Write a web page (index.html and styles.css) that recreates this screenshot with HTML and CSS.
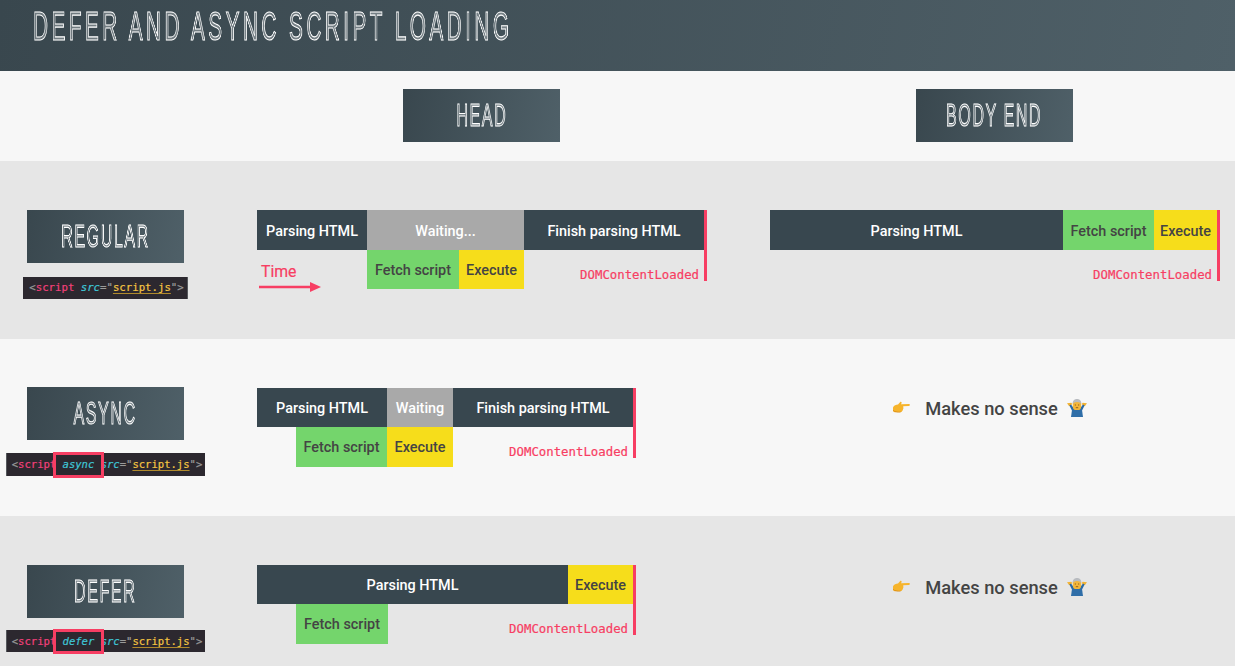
FILE: index.html
```html
<!DOCTYPE html>
<html lang="en">
<head>
<meta charset="utf-8">
<title>Defer and async script loading</title>
<link rel="stylesheet" href="styles.css">
</head>
<body>
<div class="page">
  <header class="top"><h1 class="title"><span>DEFER AND ASYNC SCRIPT LOADING</span></h1></header>

  <section class="row row-head">
    <div></div>
    <div class="col"><h2 class="tag"><span>HEAD</span></h2></div>
    <div class="col"><h2 class="tag"><span>BODY END</span></h2></div>
  </section>

  <section class="row row-grey">
    <div class="side">
      <h2 class="tag"><span>REGULAR</span></h2>
      <code class="chip chip-first"><i class="p">&lt;</i><b>script</b> <em>src</em><i class="p">="</i><u>script.js</u><i class="p">"&gt;</i></code>
    </div>
    <div class="col">
      <div class="tl">
        <div class="bars">
          <div class="seg dark w110">Parsing HTML</div>
          <div class="seg grey w157">Waiting...</div>
          <div class="seg dark w180">Finish parsing HTML</div>
        </div>
        <div class="bars under">
          <div class="lead w110">
            <span class="time">Time</span>
            <svg class="arrow" width="62" height="10" viewBox="0 0 62 10"><path d="M0 5h51" stroke="#f73e63" stroke-width="2.4"/><path d="M51 0l11 5-11 5z" fill="#f73e63"/></svg>
          </div>
          <div class="seg green w92">Fetch script</div>
          <div class="seg yellow w65">Execute</div>
          <div class="dom">DOMContentLoaded</div>
        </div>
      </div>
    </div>
    <div class="col">
      <div class="tl">
        <div class="bars">
          <div class="seg dark w293">Parsing HTML</div>
          <div class="seg green w91">Fetch script</div>
          <div class="seg yellow w63">Execute</div>
        </div>
        <div class="bars under"><div class="dom dom-full">DOMContentLoaded</div></div>
      </div>
    </div>
  </section>

  <section class="row row-light">
    <div class="side">
      <h2 class="tag"><span>ASYNC</span></h2>
      <code class="chip chip-async"><i class="p">&lt;</i><b>script</b><span class="attr"> <em>async</em> </span><em>src</em><i class="p">="</i><u>script.js</u><i class="p">"&gt;</i></code>
    </div>
    <div class="col">
      <div class="tl tl-short">
        <div class="bars">
          <div class="seg dark w130">Parsing HTML</div>
          <div class="seg grey w66">Waiting</div>
          <div class="seg dark w180">Finish parsing HTML</div>
        </div>
        <div class="bars under">
          <div class="lead w39"></div>
          <div class="seg green w91">Fetch script</div>
          <div class="seg yellow w66">Execute</div>
          <div class="dom">DOMContentLoaded</div>
        </div>
      </div>
    </div>
    <div class="col"><p class="note note-up"><svg class="emoji" width="18" height="14" viewBox="0 0 18 14"><path d="M1 6.500C2 4 4 4 6 3.500L8 1.200c1-.8 2 0 1.500 1L9 3.300l8-.2c1.200.1 1.200 1.700 0 1.800l-6 .3c.6.500.6 1.200.2 1.600.3.600.2 1.200-.3 1.500.2.700-.1 1.300-.7 1.500-.1.800-.7 1.300-1.400 1.300H5.500C3 11.500 1.500 11 1 10z" fill="#f6b42c"/><path d="M1 9.800c.8.900 2.500 1.500 4.500 1.700H8c.5 0 1-.300 1.200-.7-2.500.2-5.500 0-8.200-1.800z" fill="#d98a16"/></svg><span class="note-text">Makes no sense</span><svg class="emoji" width="20" height="18" viewBox="0 0 20 18"><path d="M0 4.300l4.300-.5.900 1.200-2 2.200-1.200-.2zM20 4.300l-4.300-.5-.9 1.200 2 2.200 1.200-.2z" fill="#f2b233"/><path d="M2.400 6.500l1.600-1 3 4-1.800 2.500zM17.600 6.500l-1.600-1-3 4 1.800 2.500z" fill="#2a6aa6"/><path d="M5 11c.5-1.500 2.700-2.200 5-2.200s4.500.7 5 2.200l1 7H4z" fill="#2f6ea8"/><rect x="5.800" y="1.500" width="8.400" height="9.500" rx="3.600" fill="#f3b63a"/><path d="M5.700 5.200C5.300 1.300 8 0 10 0s4.700 1.300 4.300 5.200c-.8-1.400-2-2.100-4.300-2.100s-3.500.7-4.300 2.100z" fill="#b9bcc0"/><path d="M7.800 6h1.200M11 6h1.200M8.800 8.700h2.400" stroke="#7a4a12" stroke-width=".8"/></svg></p></div>
  </section>

  <section class="row row-grey row-last">
    <div class="side">
      <h2 class="tag"><span>DEFER</span></h2>
      <code class="chip chip-defer"><i class="p">&lt;</i><b>script</b><span class="attr"> <em>defer</em> </span><em>src</em><i class="p">="</i><u>script.js</u><i class="p">"&gt;</i></code>
    </div>
    <div class="col">
      <div class="tl tl-short">
        <div class="bars">
          <div class="seg dark w311">Parsing HTML</div>
          <div class="seg yellow w65">Execute</div>
        </div>
        <div class="bars under">
          <div class="lead w39"></div>
          <div class="seg green w92">Fetch script</div>
          <div class="dom">DOMContentLoaded</div>
        </div>
      </div>
    </div>
    <div class="col"><p class="note"><svg class="emoji" width="18" height="14" viewBox="0 0 18 14"><path d="M1 6.500C2 4 4 4 6 3.500L8 1.200c1-.8 2 0 1.500 1L9 3.300l8-.2c1.200.1 1.200 1.700 0 1.800l-6 .3c.6.500.6 1.200.2 1.600.3.600.2 1.200-.3 1.500.2.700-.1 1.300-.7 1.500-.1.800-.7 1.300-1.400 1.300H5.500C3 11.500 1.500 11 1 10z" fill="#f6b42c"/><path d="M1 9.800c.8.900 2.500 1.500 4.500 1.700H8c.5 0 1-.300 1.200-.7-2.500.2-5.500 0-8.200-1.800z" fill="#d98a16"/></svg><span class="note-text">Makes no sense</span><svg class="emoji" width="20" height="18" viewBox="0 0 20 18"><path d="M0 4.300l4.300-.5.900 1.200-2 2.200-1.200-.2zM20 4.300l-4.300-.5-.9 1.200 2 2.200 1.200-.2z" fill="#f2b233"/><path d="M2.400 6.500l1.600-1 3 4-1.800 2.500zM17.600 6.500l-1.600-1-3 4 1.800 2.500z" fill="#2a6aa6"/><path d="M5 11c.5-1.500 2.700-2.200 5-2.200s4.500.7 5 2.200l1 7H4z" fill="#2f6ea8"/><rect x="5.800" y="1.500" width="8.400" height="9.500" rx="3.600" fill="#f3b63a"/><path d="M5.700 5.200C5.300 1.300 8 0 10 0s4.700 1.300 4.300 5.200c-.8-1.400-2-2.100-4.300-2.100s-3.500.7-4.300 2.100z" fill="#b9bcc0"/><path d="M7.800 6h1.200M11 6h1.200M8.800 8.700h2.400" stroke="#7a4a12" stroke-width=".8"/></svg></p></div>
  </section>
</div>
</body>
</html>
```

FILE: styles.css
```css
* { box-sizing: border-box; }
html, body { margin: 0; height: 100%; overflow: hidden; }
body { background: #f7f7f7; font-family: Roboto, "Liberation Sans", sans-serif; }
.page { height: 666px; overflow: hidden; }

.top {
  height: 71px;
  padding: 3px 0 0 33px;
  background: linear-gradient(100deg, #39474e, #4f6068);
}
.title, .tag {
  margin: 0;
  font-family: "Liberation Sans", sans-serif;
  font-weight: 400;
  color: rgba(255, 255, 255, .28);
  -webkit-text-stroke: 1.1px #fff;
}
.title span, .tag span { display: inline-block; white-space: nowrap; will-change: transform; }
.title { font-size: 40px; line-height: 46px; letter-spacing: 6.6px; }
.title span { transform: scaleX(.52); transform-origin: left center; }

.tag {
  width: 157px;
  height: 53px;
  display: flex;
  align-items: center;
  justify-content: center;
  background: linear-gradient(100deg, #39474e, #4f6068);
  font-size: 32px;
  letter-spacing: 3.2px;
}
.tag span { flex: none; transform: scaleX(.5); }

.row {
  display: grid;
  grid-template-columns: 257px 513px 465px;
  padding-top: 49px;
}
.row-head { height: 90px; padding-top: 18px; }
.row-head .col { width: 449px; display: flex; justify-content: center; }
.row-grey { height: 178px; background: #e6e6e6; }
.row-light { height: 177px; background: #f7f7f7; }
.row-last { height: 150px; }

.side { width: 211px; display: flex; flex-direction: column; align-items: center; }
.row-light .side { margin-top: -1px; }

.chip {
  display: block;
  margin-top: 12px;
  height: 23px;
  padding: 0 3px 0 5px;
  background: #2c282f;
  border-left: 1px solid #55585c;
  font-family: "DejaVu Sans Mono", monospace;
  font-size: 10.55px;
  line-height: 23px;
  white-space: pre;
  color: #9a9a9a;
  -webkit-text-stroke: .2px;
}
.chip-first { margin-top: 14px; height: 22px; padding-left: 6px; line-height: 21px; font-size: 10.7px; border-left: 0; border-right: 1px solid #55585c; }
.chip-async { margin-top: 13px; }
.chip-defer { height: 22px; line-height: 22px; }
.chip i { font-style: normal; }
.chip b { font-weight: 400; color: #f2407a; }
.chip em { font-style: italic; color: #3fc6d6; }
.chip u { color: #f5c542; text-decoration-color: #b08a2c; text-underline-offset: 2px; }
.attr { position: relative; }
.attr::after {
  content: "";
  position: absolute;
  left: -3px;
  right: -3px;
  top: -6px;
  bottom: -8px;
  border: 3px solid #f73e63;
}
.chip-defer .attr::after { bottom: -7px; }

.tl { position: relative; width: 450px; }
.tl::after {
  content: "";
  position: absolute;
  top: 0;
  left: 447px;
  width: 3px;
  height: 71px;
  background: #f73e63;
}
.tl-short { width: 379px; }
.tl-short::after { left: 376px; height: 70px; }

.bars { display: flex; height: 40px; }
.under { height: 39px; }
.tl-short .bars { height: 39px; }
.tl-short .under { height: 40px; }
.seg {
  display: flex;
  align-items: center;
  justify-content: center;
  padding-top: 1px;
  font-size: 14.4px;
  font-weight: 500;
  white-space: nowrap;
  flex: none;
}
.tl > .bars:first-child .seg { padding-top: 2px; }
.tl-short > .bars:first-child .seg { padding-top: 1px; }
.dark { background: #38474f; color: #fff; }
.grey { background: #a9a9a9; color: #fff; }
.green { background: #74d56c; color: #444; }
.yellow { background: #f6dd1b; color: #444; }

.w39 { width: 39px; } .w63 { width: 63px; } .w65 { width: 65px; } .w66 { width: 66px; }
.w91 { width: 91px; } .w92 { width: 92px; } .w110 { width: 110px; } .w130 { width: 130px; }
.w157 { width: 157px; } .w180 { width: 180px; } .w293 { width: 293px; } .w311 { width: 311px; }

.lead { flex: none; padding: 12px 0 0 4px; }
.time { display: block; font-size: 15.8px; line-height: 19px; color: #f73e63; -webkit-text-stroke: .2px; }
.arrow { display: block; margin: 1px 0 0 -2px; }

.dom {
  flex: 1;
  padding: 18px 8px 0 0;
  text-align: right;
  font-family: "DejaVu Sans Mono", monospace;
  font-size: 12.35px;
  line-height: 15px;
  color: #f73e63;
  -webkit-text-stroke: .2px;
  white-space: nowrap;
}
.dom-full { flex: none; width: 450px; }

.note {
  width: 450px;
  margin: 11px 0 0;
  padding-right: 11px;
  display: flex;
  align-items: center;
  justify-content: center;
  height: 22px;
  font-size: 18.3px;
  font-weight: 500;
  color: #444;
}
.note-up { margin-top: 9px; }
.note-text { margin: 0 9px 0 15px; }
.emoji { flex: none; }
```
